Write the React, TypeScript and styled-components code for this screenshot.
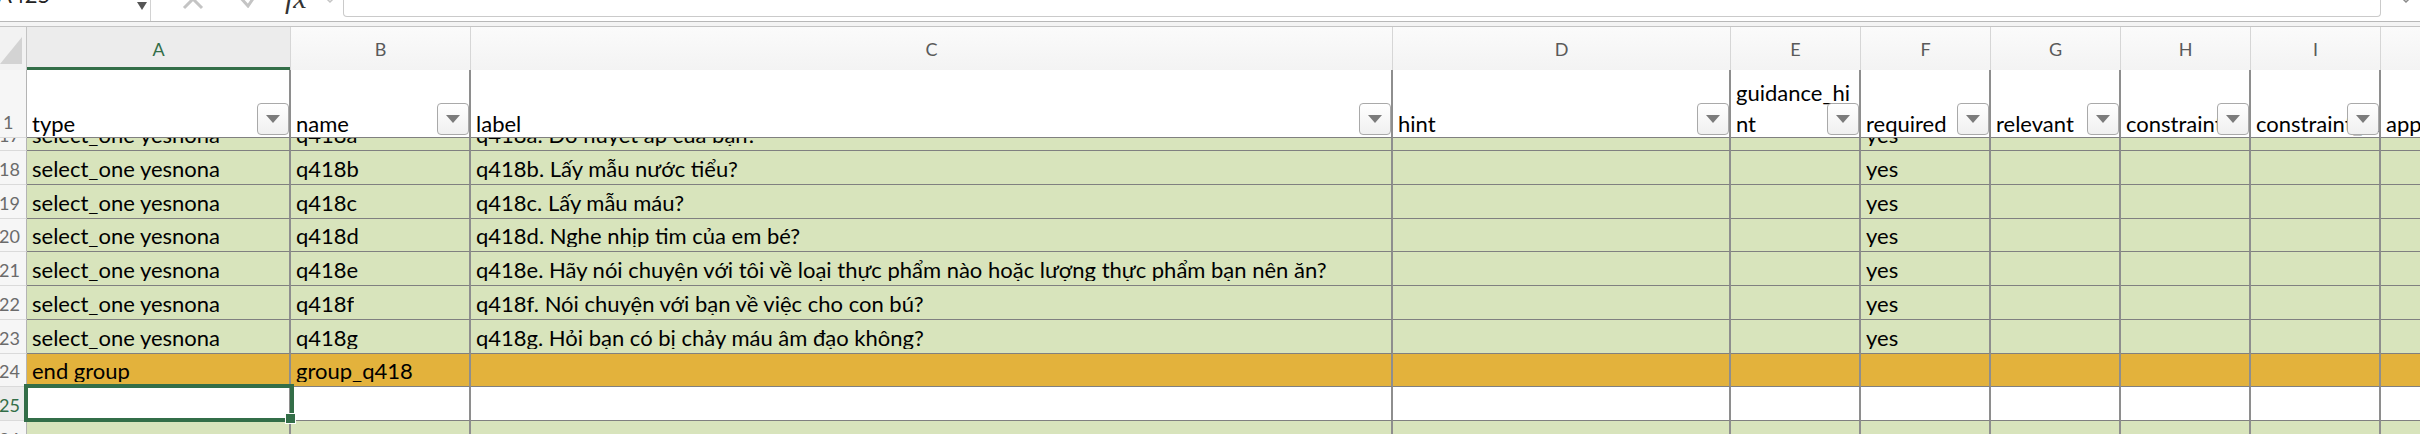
import React from 'react';
import styled, { createGlobalStyle } from 'styled-components';

const GlobalStyle = createGlobalStyle`
  html, body {
    margin: 0;
    padding: 0;
    background: #fff;
  }
  body {
    overflow: hidden;
  }
`;

const WIDTHS = [27, 264, 180, 922, 338, 130, 130, 130, 130, 130, 130];
const TEMPLATE = WIDTHS.map((w) => `${w}px`).join(' ');
const LETTERS = ['A', 'B', 'C', 'D', 'E', 'F', 'G', 'H', 'I', 'J'];

const SELECT = '#336e48';
const GRID_V = '#8e8e8e';
const GRID_H = '#808080';

const FILLS = {
  green: '#d8e4bc',
  gold: '#e3b23c',
  white: '#ffffff',
};

type Fill = keyof typeof FILLS;

const Sheet = styled.div`
  width: 2420px;
  height: 434px;
  overflow: hidden;
  font-family: Lato, 'Noto Sans', sans-serif;
  color: #000;
  background: #fff;
`;

/* formula bar */
const FormulaBar = styled.div`
  display: flex;
  align-items: flex-start;
  height: 21px;
  border-bottom: 1px solid #b8b8b8;
  overflow: hidden;
`;

const NameBox = styled.div`
  flex: 0 0 150px;
  height: 100%;
  border-right: 1px solid #d2d2d2;
  display: flex;
  justify-content: space-between;
  align-items: flex-start;
`;

const NameText = styled.span`
  font-size: 22px;
  line-height: 22px;
  margin: -16px 0 0 -3px;
  color: #222;
`;

const NameCaret = styled.span`
  width: 0;
  height: 0;
  margin: 2px 3px 0 0;
  border-left: 5px solid transparent;
  border-right: 5px solid transparent;
  border-top: 8px solid #555;
`;

const Tool = styled.span<{ $left: number; $top: number; $color?: string }>`
  display: flex;
  flex: none;
  margin-left: ${(p) => p.$left}px;
  margin-top: ${(p) => p.$top}px;
  color: ${(p) => p.$color || '#c4c4c4'};
`;

const FxText = styled.span`
  font-family: 'Liberation Serif', serif;
  font-style: italic;
  font-size: 30px;
  line-height: 30px;
  color: #333;
  width: 28px;
`;

const FormulaInput = styled.div`
  flex: 0 0 2038px;
  height: 17px;
  box-sizing: border-box;
  margin-left: 8px;
  border: 1px solid #cacaca;
  border-top: 0;
  border-radius: 0 0 4px 4px;
`;

const BarGap = styled.div`
  height: 4px;
  background: #f4f4f4;
  border-bottom: 1px solid #c4c4c4;
`;

/* column letters */
const LetterRow = styled.div`
  display: grid;
  grid-template-columns: ${TEMPLATE};
  height: 43px;
`;

const Corner = styled.div`
  background: #f2f2f2;
  border-right: 1px solid #c4c4c4;
  display: flex;
  align-items: flex-end;
  padding-bottom: 6px;
  box-sizing: border-box;
`;

const Letter = styled.div<{ $active?: boolean }>`
  display: flex;
  align-items: center;
  justify-content: center;
  box-sizing: border-box;
  font-size: 18px;
  color: ${(p) => (p.$active ? SELECT : '#5a5a5a')};
  background: ${(p) => (p.$active ? '#ececec' : 'linear-gradient(#fbfbfb, #f3f3f3)')};
  border-right: 1px solid #d6d6d6;
  box-shadow: ${(p) => (p.$active ? `inset 0 -3px 0 ${SELECT}` : 'none')};
`;

/* rows */
const Row = styled.div<{ $fill: Fill; $height: number }>`
  display: grid;
  grid-template-columns: ${TEMPLATE};
  height: ${(p) => p.$height}px;
  background: ${(p) => FILLS[p.$fill]};
`;

const RowNum = styled.div<{ $active?: boolean; $frozen?: boolean }>`
  display: flex;
  align-items: flex-end;
  justify-content: ${(p) => (p.$frozen ? 'flex-start' : 'flex-end')};
  box-sizing: border-box;
  padding: ${(p) => (p.$frozen ? '0 0 4px 3px' : '0 6px 4px 0')};
  font-size: 18px;
  line-height: 22px;
  white-space: nowrap;
  color: ${(p) => (p.$active ? SELECT : '#6b6b6b')};
  background: ${(p) => (p.$active ? '#ececec' : '#f6f6f6')};
  border-right: 1px solid #b4b4b4;
  border-bottom: 1px solid #dadada;
`;

const Cell = styled.div<{ $tall?: boolean }>`
  position: relative;
  display: flex;
  align-items: flex-end;
  min-width: 0;
  box-sizing: border-box;
  padding: ${(p) => (p.$tall ? '0 0 0 5px' : '0 0 4px 5px')};
  font-size: 22px;
  line-height: ${(p) => (p.$tall ? '31px' : '22px')};
  border-right: 2px solid ${GRID_V};
  border-bottom: 1px solid ${GRID_H};
`;

const CellText = styled.div<{ $drop?: number }>`
  overflow: hidden;
  white-space: nowrap;
  min-width: 0;
  margin-bottom: ${(p) => -(p.$drop || 0)}px;
`;

const FilterButton = styled.div`
  position: absolute;
  right: 0;
  bottom: 2px;
  width: 32px;
  height: 32px;
  box-sizing: border-box;
  display: flex;
  align-items: center;
  justify-content: center;
  background: linear-gradient(#ffffff, #f0f0f0);
  border: 1px solid #a9a9a9;
  border-radius: 4px;
  z-index: 1;

  &::after {
    content: '';
    width: 0;
    height: 0;
    border-left: 7px solid transparent;
    border-right: 7px solid transparent;
    border-top: 8px solid #7b7b7b;
  }
`;

const Pane = styled.div`
  height: 296px;
  overflow: hidden;
`;

const Scrolled = styled.div`
  margin-top: -20.75px;
`;

const Selection = styled.div`
  position: absolute;
  top: -3px;
  left: -3px;
  right: -5px;
  bottom: -2px;
  border: 4px solid ${SELECT};
  pointer-events: none;
  z-index: 2;
`;

const Handle = styled.div`
  position: absolute;
  right: -6px;
  bottom: -6px;
  width: 11px;
  height: 11px;
  box-sizing: border-box;
  background: ${SELECT};
  border: 1px solid #fff;
`;

const fields: string[][] = [
  ['type'],
  ['name'],
  ['label'],
  ['hint'],
  ['guidance_hi', 'nt'],
  ['required'],
  ['relevant'],
  ['constraint'],
  ['constraint_message'],
  ['appearance'],
];

type RowData = { n: number; fill: Fill; cells: string[] };

const rows: RowData[] = [
  { n: 17, fill: 'green', cells: ['select_one yesnona', 'q418a', 'q418a. Đo huyết áp của bạn?', '', '', 'yes'] },
  { n: 18, fill: 'green', cells: ['select_one yesnona', 'q418b', 'q418b. Lấy mẫu nước tiểu?', '', '', 'yes'] },
  { n: 19, fill: 'green', cells: ['select_one yesnona', 'q418c', 'q418c. Lấy mẫu máu?', '', '', 'yes'] },
  { n: 20, fill: 'green', cells: ['select_one yesnona', 'q418d', 'q418d. Nghe nhịp tim của em bé?', '', '', 'yes'] },
  {
    n: 21,
    fill: 'green',
    cells: [
      'select_one yesnona',
      'q418e',
      'q418e. Hãy nói chuyện với tôi về loại thực phẩm nào hoặc lượng thực phẩm bạn nên ăn?',
      '',
      '',
      'yes',
    ],
  },
  { n: 22, fill: 'green', cells: ['select_one yesnona', 'q418f', 'q418f. Nói chuyện với bạn về việc cho con bú?', '', '', 'yes'] },
  { n: 23, fill: 'green', cells: ['select_one yesnona', 'q418g', 'q418g. Hỏi bạn có bị chảy máu âm đạo không?', '', '', 'yes'] },
  { n: 24, fill: 'gold', cells: ['end group', 'group_q418'] },
  { n: 25, fill: 'white', cells: [] },
  { n: 26, fill: 'green', cells: [] },
];

const ROW_H = 33.75;

export default function App() {
  return (
    <Sheet>
      <GlobalStyle />
      <FormulaBar>
        <NameBox>
          <NameText>A425</NameText>
          <NameCaret />
        </NameBox>
        <Tool $left={31} $top={-12}>
          <svg width="22" height="22" viewBox="0 0 22 22">
            <path d="M2 2 L20 20 M20 2 L2 20" stroke="currentColor" strokeWidth="3" fill="none" />
          </svg>
        </Tool>
        <Tool $left={34} $top={-12}>
          <svg width="22" height="20" viewBox="0 0 22 20">
            <path d="M1 8 L10 18 L21 2" stroke="currentColor" strokeWidth="3" fill="none" />
          </svg>
        </Tool>
        <Tool $left={25} $top={-17} $color="#333">
          <FxText>fx</FxText>
        </Tool>
        <Tool $left={12} $top={-3}>
          <svg width="10" height="7" viewBox="0 0 10 7">
            <path d="M1 1 L5 5 L9 1" stroke="currentColor" strokeWidth="1.5" fill="none" />
          </svg>
        </Tool>
        <FormulaInput />
        <Tool $left={20} $top={-3} $color="#8a8a8a">
          <svg width="10" height="7" viewBox="0 0 10 7">
            <path d="M1 1 L5 5 L9 1" stroke="currentColor" strokeWidth="1.5" fill="none" />
          </svg>
        </Tool>
      </FormulaBar>
      <BarGap />

      <LetterRow>
        <Corner>
          <svg width="23" height="27" viewBox="0 0 23 27">
            <path d="M22 0 L22 27 L0 27 Z" fill="#d3d3d3" />
          </svg>
        </Corner>
        {LETTERS.map((l) => (
          <Letter key={l} $active={l === 'A'}>
            {l}
          </Letter>
        ))}
      </LetterRow>

      <Row $fill="white" $height={68}>
        <RowNum $frozen>1</RowNum>
        {fields.map((lines, i) => (
          <Cell key={i} $tall>
            <CellText $drop={2}>
              {lines.map((t) => (
                <div key={t}>{t}</div>
              ))}
            </CellText>
            <FilterButton />
          </Cell>
        ))}
      </Row>

      <Pane>
        <Scrolled>
          {rows.map((r) => (
            <Row key={r.n} $fill={r.fill} $height={ROW_H}>
              <RowNum $active={r.n === 25}>{r.n}</RowNum>
              {LETTERS.map((l, i) => (
                <Cell key={l}>
                  <CellText>{r.cells[i] || ''}</CellText>
                  {r.n === 25 && i === 0 && (
                    <Selection>
                      <Handle />
                    </Selection>
                  )}
                </Cell>
              ))}
            </Row>
          ))}
        </Scrolled>
      </Pane>
    </Sheet>
  );
}
